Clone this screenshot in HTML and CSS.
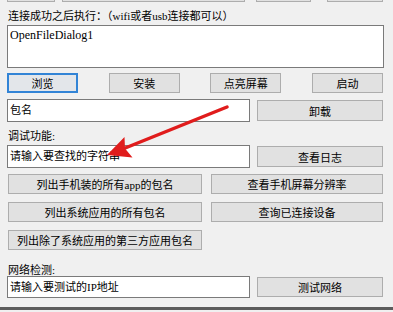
FILE: index.html
```html
<!DOCTYPE html>
<html lang="zh-CN">
<head>
    <meta charset="UTF-8">
    <title>ADB 工具</title>
    <link rel="stylesheet" href="styles.css">
</head>
<body>

    <div class="form">
        <!-- Row cut off by the top edge -->
        <div class="top-row">
            <div class="top-cell cell-a"></div>
            <div class="top-cell cell-b"></div>
            <div class="top-cell cell-c"></div>
            <div class="top-cell cell-d"></div>
        </div>

        <div class="label">连接成功之后执行：（wifi或者usb连接都可以）</div>
        <div class="memo">OpenFileDialog1</div>

        <div class="btn-row">
            <button class="btn focused">浏览</button>
            <button class="btn">安装</button>
            <button class="btn">点亮屏幕</button>
            <button class="btn">启动</button>
        </div>

        <div class="field-row">
            <div class="textbox">包名</div>
            <button class="btn side-btn">卸载</button>
        </div>

        <!-- Debug section -->
        <div class="label">调试功能:</div>
        <div class="field-row">
            <div class="textbox">请输入要查找的字符串</div>
            <button class="btn side-btn">查看日志</button>
        </div>

        <div class="pair-row">
            <button class="btn wide-btn">列出手机装的所有app的包名</button>
            <button class="btn narrow-btn">查看手机屏幕分辨率</button>
        </div>
        <div class="pair-row">
            <button class="btn wide-btn">列出系统应用的所有包名</button>
            <button class="btn narrow-btn">查询已连接设备</button>
        </div>
        <div class="pair-row">
            <button class="btn wide-btn">列出除了系统应用的第三方应用包名</button>
        </div>

        <!-- Network section -->
        <div class="label net-label">网络检测:</div>
        <div class="field-row last-row">
            <div class="textbox">请输入要测试的IP地址</div>
            <button class="btn side-btn">测试网络</button>
        </div>
    </div>
    <div class="bottom-edge"></div>

    <!-- Annotation arrow drawn over the form -->
    <svg class="arrow" width="393" height="312" viewBox="0 0 393 312">
        <line x1="227" y1="107" x2="124" y2="148.5" stroke="#e01c1c" stroke-width="3.5" stroke-linecap="round"/>
        <polygon points="107,155 124.5,137 125,148.5 132.5,157.5" fill="#e01c1c"/>
    </svg>

</body>
</html>
```

FILE: styles.css
```css
* {
    box-sizing: border-box;
}

body, html {
    margin: 0;
    width: 393px;
    height: 312px;
    overflow: hidden;
    background: #f0f0f0;
    font-family: "Liberation Serif", "Noto Sans CJK SC", serif;
    font-size: 11px;
    color: #000;
}

body {
    position: relative;
}

.form {
    padding-left: 7px;
    width: 384px;
}

/* Top row, only its bottom edge is visible */
.top-row {
    display: flex;
    height: 20px;
    margin-top: -18px;
}

.top-cell {
    height: 20px;
    background: #e1e1e1;
    border: 1px solid #adadad;
}

.cell-a { width: 48px; }
.cell-b { width: 183px; margin-left: 7px; }
.cell-c { width: 55px; margin-left: 11px; }
.cell-d { width: 56px; margin-left: 16px; }

.label {
    margin-top: 7px;
    height: 14px;
    line-height: 14px;
    padding-left: 1px;
    white-space: nowrap;
}

.memo {
    margin-top: 2px;
    height: 43px;
    width: 377px;
    background: #fff;
    border: 1px solid #7a7a7a;
    padding: 2px 2px;
    font-size: 12px;
    line-height: 15px;
}

.btn {
    display: flex;
    align-items: center;
    justify-content: center;
    height: 20px;
    padding: 0;
    margin: 0;
    background: #e1e1e1;
    border: 1px solid #adadad;
    border-radius: 0;
    font-family: inherit;
    font-size: 11px;
    color: #000;
    white-space: nowrap;
}

.btn.focused {
    border: 2px solid #3284d6;
    background: #e3e6ea;
}

.btn-row {
    display: flex;
    justify-content: space-between;
    margin-top: 5px;
    width: 376px;
}

.btn-row .btn {
    width: 71px;
}

.field-row {
    display: flex;
    align-items: center;
    gap: 7px;
    margin-top: 6px;
}

.textbox {
    width: 243px;
    height: 23px;
    background: #fff;
    border: 1px solid #7a7a7a;
    padding: 0 2px;
    line-height: 21px;
    white-space: nowrap;
}

.side-btn {
    width: 126px;
    height: 21px;
}

.label + .field-row {
    margin-top: 2px;
}

.pair-row {
    display: flex;
    gap: 9px;
    margin-top: 8px;
    padding-left: 1px;
}

.field-row + .pair-row {
    margin-top: 6px;
}

.wide-btn {
    width: 194px;
}

.narrow-btn {
    width: 172px;
}

.net-label {
    margin-top: 14px;
    height: 12px;
    line-height: 12px;
}

.label.net-label + .field-row {
    margin-top: 0;
}

.last-row .textbox {
    height: 22px;
    line-height: 20px;
}

.last-row .side-btn {
    height: 20px;
}

.bottom-edge {
    margin-top: 9px;
    height: 3px;
    background: #5c5c5c;
}

.arrow {
    position: absolute;
    left: 0;
    top: 0;
    pointer-events: none;
}
```
